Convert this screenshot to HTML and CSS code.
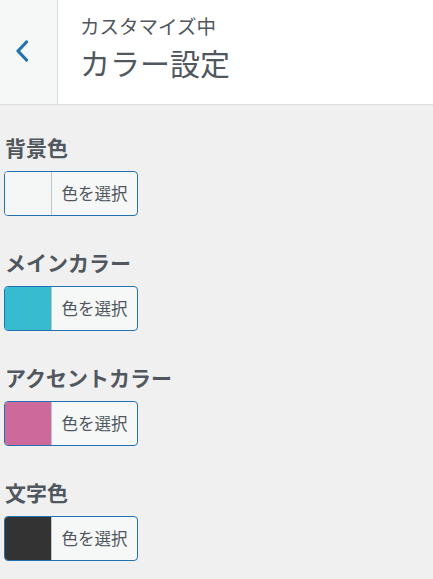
FILE: index.html
```html
<!DOCTYPE html>
<html lang="ja">
<head>
<meta charset="utf-8">
<title>カラー設定</title>
<link rel="stylesheet" href="styles.css">
</head>
<body>
<header class="head">
  <button class="back" aria-label="戻る">
    <svg width="14" height="22" viewBox="0 0 14 22"><path d="M11.5 2 L3 11 L11.5 20" fill="none" stroke="#2271b1" stroke-width="3.2" stroke-linecap="round" stroke-linejoin="round"/></svg>
  </button>
  <div class="titles">
    <div class="sub">カスタマイズ中</div>
    <div class="title">カラー設定</div>
  </div>
</header>
<main class="content">
  <section class="control">
    <div class="label">背景色</div>
    <button class="picker"><span class="swatch sw-bg"></span><span class="btext">色を選択</span></button>
  </section>
  <section class="control">
    <div class="label">メインカラー</div>
    <button class="picker"><span class="swatch sw-main"></span><span class="btext">色を選択</span></button>
  </section>
  <section class="control">
    <div class="label">アクセントカラー</div>
    <button class="picker"><span class="swatch sw-accent"></span><span class="btext">色を選択</span></button>
  </section>
  <section class="control">
    <div class="label">文字色</div>
    <button class="picker"><span class="swatch sw-text"></span><span class="btext">色を選択</span></button>
  </section>
</main>
</body>
</html>
```
FILE: styles.css
```css
html, body {
  margin: 0;
  padding: 0;
  background: #f0f0f1;
  font-family: "Noto Sans CJK JP", "Noto Sans", sans-serif;
  color: #50575e;
}
.head {
  display: flex;
  height: 104px;
  background: #fff;
  border-bottom: 1px solid #dcdcde;
}
.back {
  width: 58px;
  flex: none;
  margin: 0;
  padding: 0;
  border: 0;
  border-right: 1px solid #dcdcde;
  background: #f6f7f7;
  display: flex;
  align-items: center;
  justify-content: center;
  padding-right: 14px;
  padding-bottom: 2px;
  box-sizing: border-box;
}
.titles {
  padding-left: 22px;
  padding-top: 12px;
}
.sub {
  font-size: 19.5px;
  line-height: 28px;
  color: #50575e;
}
.title {
  font-size: 30px;
  line-height: 40px;
  color: #50575e;
  margin-top: 2px;
}
.content {
  padding: 28px 0 0 4px;
}
.control {
  margin-bottom: 32px;
}
.label {
  font-size: 21px;
  font-weight: bold;
  line-height: 28px;
  height: 28px;
  margin-bottom: 10px;
  padding-left: 1px;
  color: #50575e;
}
.picker {
  display: flex;
  align-items: stretch;
  height: 45px;
  width: 134px;
  padding: 0;
  margin: 0;
  border: 1px solid #2271b1;
  border-radius: 4px;
  background: #f6f7f7;
  overflow: hidden;
  box-sizing: border-box;
  font-family: inherit;
}
.swatch {
  width: 46px;
  flex: none;
  border-right: 1px solid #c3c4c7;
}
.sw-bg { background: #f5f7f7; }
.sw-main { background: #36bbd1; }
.sw-accent { background: #cd6a9b; }
.sw-text { background: #333333; }
.btext {
  flex: 1;
  display: flex;
  align-items: center;
  justify-content: center;
  font-size: 16.5px;
  color: #50575e;
  padding-bottom: 1px;
}
```
